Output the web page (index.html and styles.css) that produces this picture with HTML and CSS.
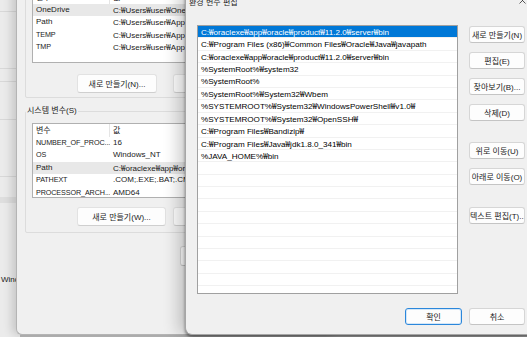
FILE: index.html
```html
<!DOCTYPE html>
<html lang="ko">
<head>
  <meta charset="UTF-8">
  <title>환경 변수 편집</title>
  <link rel="stylesheet" href="styles.css">
</head>
<body>
  <div class="desktop">

    <!-- 시스템 속성 (뒤쪽 창) -->
    <div class="win sysprop">
      <div class="bg-rule"></div>
      <div></div>
      <div class="bg-text">설정(E)...</div>
      <div class="bg-rule"></div>
      <div class="bg-rule"></div>
      <div class="bg-rule"></div>
      <div class="bg-text">설정(T)...</div>
      <div></div>
      <div class="bg-text">환경 변수(N)...</div>
      <div class="bg-rule"></div>
      <div></div>
      <div class="bg-band"></div>
      <div></div>
      <div class="bg-text">원격 접근</div>
      <div></div>
      <div class="bg-text">도메인</div>
      <div></div>
      <div class="bg-text start">Windows 정품 인증</div>
      <div></div>
    </div>

    <!-- 환경 변수 -->
    <div class="win envvars">
      <div class="group">
        <div class="varlist user">
          <div class="var-head"><span>변수</span><span>값</span></div>
          <div class="var-row hl"><span>OneDrive</span><span>C:<b>₩</b>Users<b>₩</b>user<b>₩</b>OneDrive</span></div>
          <div class="var-row"><span>Path</span><span>C:<b>₩</b>Users<b>₩</b>user<b>₩</b>AppData<b>₩</b>Local<b>₩</b>Microsoft<b>₩</b>WindowsApps</span></div>
          <div class="var-row"><span class="caps">TEMP</span><span>C:<b>₩</b>Users<b>₩</b>user<b>₩</b>AppData<b>₩</b>Local<b>₩</b>Temp</span></div>
          <div class="var-row"><span class="caps">TMP</span><span>C:<b>₩</b>Users<b>₩</b>user<b>₩</b>AppData<b>₩</b>Local<b>₩</b>Temp</span></div>
        </div>
        <div class="btn-row">
          <button class="btn">새로 만들기(N)...</button>
          <button class="btn">편집(E)...</button>
        </div>
      </div>

      <div class="group system">
        <span class="group-label">시스템 변수(S)</span>
        <div class="varlist sys">
          <div class="var-head"><span>변수</span><span>값</span></div>
          <div class="var-row"><span class="caps">NUMBER_OF_PROC...</span><span>16</span></div>
          <div class="var-row"><span class="caps">OS</span><span>Windows_NT</span></div>
          <div class="var-row hl"><span>Path</span><span>C:<b>₩</b>oraclexe<b>₩</b>app<b>₩</b>oracle<b>₩</b>product<b>₩</b>11.2.0<b>₩</b>server<b>₩</b>bin</span></div>
          <div class="var-row"><span class="caps">PATHEXT</span><span>.COM;.EXE;.BAT;.CMD;.VBS;.VBE;.JS</span></div>
          <div class="var-row"><span class="caps">PROCESSOR_ARCH...</span><span>AMD64</span></div>
        </div>
        <div class="btn-row wide">
          <button class="btn">새로 만들기(W)...</button>
          <button class="btn">편집(I)...</button>
        </div>
      </div>

      <div class="env-footer">
        <button class="btn">확인</button>
      </div>
    </div>

    <!-- 환경 변수 편집 -->
    <div class="win editor">
      <div class="titlebar">
        <span class="title">환경 변수 편집</span>
        <svg class="close" width="7" height="7" viewBox="0 0 7 7">
          <path d="M0.5 0.5 L6.5 6.5 M6.5 0.5 L0.5 6.5" stroke="#333" stroke-width="0.8" fill="none"/>
        </svg>
      </div>

      <div class="editor-body">
        <div class="pathlist">
          <div class="path-row sel">C:<b>₩</b>oraclexe<b>₩</b>app<b>₩</b>oracle<b>₩</b>product<b>₩</b>11.2.0<b>₩</b>server<b>₩</b>bin</div>
          <div class="path-row">C:<b>₩</b>Program Files (x86)<b>₩</b>Common Files<b>₩</b>Oracle<b>₩</b>Java<b>₩</b>javapath</div>
          <div class="path-row">C:<b>₩</b>oraclexe<b>₩</b>app<b>₩</b>oracle<b>₩</b>product<b>₩</b>11.2.0<b>₩</b>server<b>₩</b>bin</div>
          <div class="path-row">%SystemRoot%<b>₩</b>system32</div>
          <div class="path-row">%SystemRoot%</div>
          <div class="path-row">%SystemRoot%<b>₩</b>System32<b>₩</b>Wbem</div>
          <div class="path-row">%SYSTEMROOT%<b>₩</b>System32<b>₩</b>WindowsPowerShell<b>₩</b>v1.0<b>₩</b></div>
          <div class="path-row">%SYSTEMROOT%<b>₩</b>System32<b>₩</b>OpenSSH<b>₩</b></div>
          <div class="path-row">C:<b>₩</b>Program Files<b>₩</b>Bandizip<b>₩</b></div>
          <div class="path-row">C:<b>₩</b>Program Files<b>₩</b>Java<b>₩</b>jdk1.8.0_341<b>₩</b>bin</div>
          <div class="path-row">%JAVA_HOME%<b>₩</b>bin</div>
          <div class="path-row"></div>
          <div class="path-row"></div>
          <div class="path-row"></div>
          <div class="path-row"></div>
          <div class="path-row"></div>
          <div class="path-row"></div>
          <div class="path-row"></div>
          <div class="path-row"></div>
          <div class="path-row"></div>
          <div class="path-row"></div>
          <div class="path-row"></div>
        </div>

        <div class="side-btns">
          <button class="btn">새로 만들기(N)</button>
          <button class="btn">편집(E)</button>
          <button class="btn">찾아보기(B)...</button>
          <button class="btn">삭제(D)</button>
          <button class="btn gap">위로 이동(U)</button>
          <button class="btn">아래로 이동(O)</button>
          <button class="btn gap2">텍스트 편집(T)...</button>
        </div>
      </div>

      <div class="editor-footer">
        <button class="btn default">확인</button>
        <button class="btn">취소</button>
      </div>
    </div>

  </div>
</body>
</html>
```

FILE: styles.css
```css
body {
  margin: 0;
  font-family: "Liberation Sans", "Noto Sans CJK KR", sans-serif;
  font-size: 8px;
  color: #1a1a1a;
}
/* 원화 기호(역슬래시)는 한글 글꼴의 반각 글리프로 */
b {
  font-family: "Noto Sans CJK KR", sans-serif;
  font-weight: normal;
}
.desktop {
  position: relative;
  width: 527px;
  height: 337px;
  overflow: hidden;
  background: #b8b8b8;
}
.win {
  position: absolute;
  background: #f0f0f0;
  box-sizing: border-box;
}
.btn {
  font-family: inherit;
  font-size: 8px;
  color: #1a1a1a;
  background: #fdfdfd;
  border: 1px solid #d6d6d6;
  border-bottom-color: #c4c4c4;
  border-radius: 3px;
  padding: 0;
  white-space: nowrap;
  overflow: hidden;
}

/* 뒤쪽 창 */
.sysprop {
  left: -64px;
  top: 0;
  width: 84px;
  height: 337px;
  background: #ebebeb;
  display: grid;
  grid-template-rows: 12px 36px 14px 7px 13px 38px 14px 21px 14px 8px 20px 6px 21px 14px 8px 14px 13px 14px 1fr;
}
.bg-rule {
  border-bottom: 1px solid #d8d8d8;
}
.bg-band {
  background: #dedede;
}
.bg-text {
  line-height: 14px;
  white-space: nowrap;
  text-align: right;
  padding-right: 2px;
  color: #222;
}
.bg-text.start {
  text-align: left;
  padding-left: 65px;
}

/* 환경 변수 창 */
.envvars {
  left: 16px;
  top: -40px;
  width: 320px;
  height: 375px;
  padding: 15px 0 0 8px;
  border-left: 1px solid #b4b4b4;
  border-bottom: 1px solid #b4b4b4;
  border-bottom-left-radius: 6px;
  box-shadow: -4px 0 10px rgba(0, 0, 0, 0.16);
}
.group {
  position: relative;
  border: 1px solid #dcdcdc;
  border-radius: 2px;
  padding: 14px 0 4px 6px;
}
.group.system {
  margin-top: 13px;
  padding: 11px 0 6px 6px;
}
.group-label {
  position: absolute;
  top: -7px;
  left: 0;
  padding: 0 1px;
  line-height: 12px;
  background: #f0f0f0;
}
.varlist {
  background: #fff;
  border: 1px solid #b0b0b0;
  box-sizing: border-box;
  overflow: hidden;
}
.varlist.user {
  height: 73px;
}
.varlist.sys {
  height: 75px;
}
.var-head, .var-row {
  display: grid;
  grid-template-columns: 77px 1fr;
  white-space: nowrap;
}
.var-head {
  height: 13px;
  line-height: 13px;
}
.var-head span:first-child {
  border-right: 1px solid #e5e5e5;
}
.var-row {
  height: 12.4px;
  line-height: 12.4px;
}
.var-head span, .var-row span {
  padding-left: 3px;
  overflow: hidden;
}
.var-row span.caps {
  font-size: 7.2px;
  letter-spacing: -0.1px;
}
.var-row.hl {
  background: #e8e8e8;
}
.btn-row {
  display: grid;
  grid-template-columns: 96px 80px;
  padding-left: 45px;
  margin-top: 11px;
}
.btn-row.wide {
  margin-top: 9px;
}
.btn-row .btn {
  height: 19px;
  width: 80px;
  border-color: #e2e2e2;
  border-bottom-color: #cfcfcf;
}
.btn-row.wide .btn:first-child {
  width: 89px;
}
.env-footer {
  margin-top: 13px;
  padding-left: 155px;
}
.env-footer .btn {
  width: 60px;
  height: 20px;
}

/* 환경 변수 편집 창 */
.editor {
  left: 185px;
  top: -10px;
  width: 352px;
  height: 345px;
  border-left: 1px solid #a6a6a6;
  border-bottom: 1px solid #a6a6a6;
  border-bottom-left-radius: 7px;
  box-shadow: -7px 0 16px rgba(0, 0, 0, 0.2), 0 2px 3px rgba(0, 0, 0, 0.45);
}
.titlebar {
  height: 35px;
  display: flex;
  justify-content: space-between;
  align-items: flex-start;
  padding: 7px 11px 0 3px;
  box-sizing: border-box;
}
.title {
  line-height: 11px;
  color: #222;
}
.close {
  margin-top: 0;
}
.editor-body {
  display: flex;
  gap: 11px;
  padding-left: 11px;
}
.pathlist {
  width: 261px;
  height: 269px;
  background: #fff;
  border: 1px solid #a0a0a0;
  box-sizing: border-box;
  overflow: hidden;
  font-size: 8.1px;
  color: #000;
}
.path-row {
  height: 12.4px;
  line-height: 12px;
  padding-left: 3px;
  border-bottom: 1px solid #f1f1f1;
  box-sizing: border-box;
  white-space: nowrap;
  overflow: hidden;
}
.path-row.sel {
  background: #0078d7;
  color: #fff;
}
.side-btns {
  display: flex;
  flex-direction: column;
  width: 56px;
  padding-top: 1px;
}
.side-btns .btn {
  height: 17px;
}
.side-btns .btn + .btn {
  margin-top: 9px;
}
.side-btns .btn.gap {
  margin-top: 21px;
}
.side-btns .btn.gap2 {
  margin-top: 22px;
}
.editor-footer {
  display: flex;
  justify-content: flex-end;
  gap: 7px;
  margin-top: 14px;
  padding-right: 12px;
}
.editor-footer .btn {
  width: 56px;
  height: 17px;
}
.editor-footer .btn.default {
  width: 57px;
  border: 1px solid #2b87db;
  box-shadow: inset 0 0 0 1px #d4e7f8;
}
```
